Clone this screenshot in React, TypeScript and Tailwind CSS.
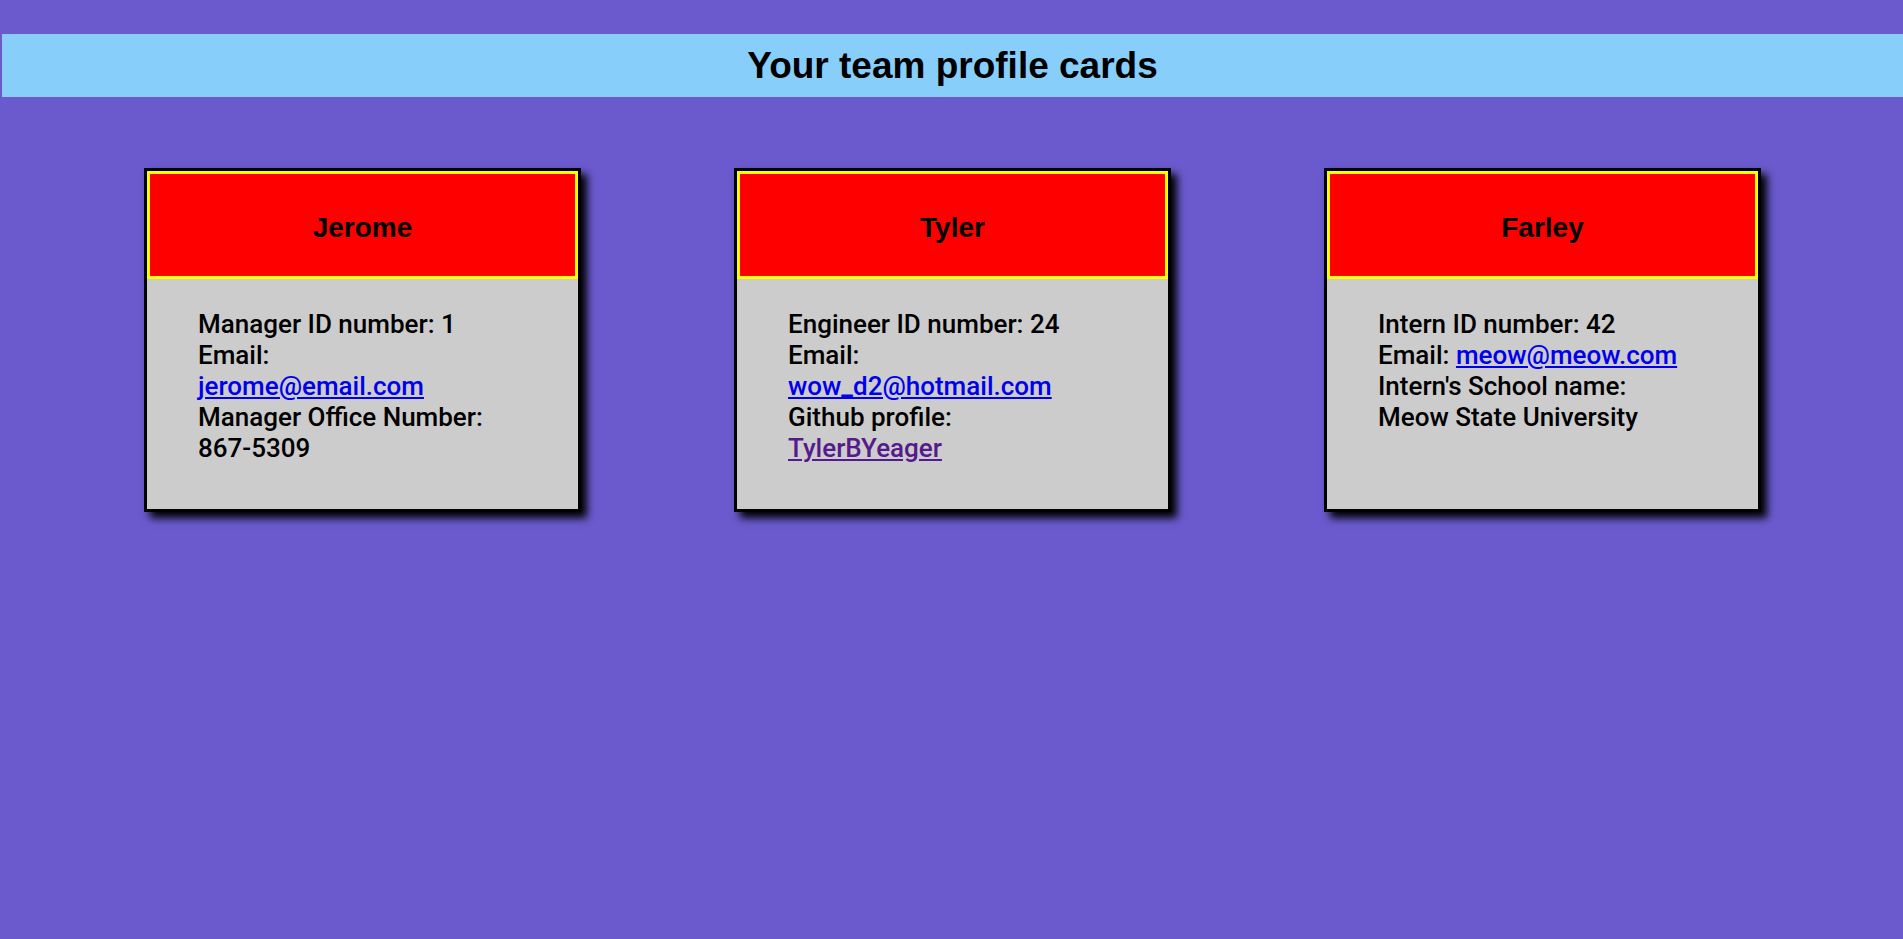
type Member = {
  name: string;
  rows: React.ReactNode;
};

const link = "text-[#0000ee] underline";
const visited = "text-[#551a8b] underline";

const members: Member[] = [
  {
    name: "Jerome",
    rows: (
      <>
        <p>Manager ID number: 1</p>
        <p>Email:</p>
        <p>
          <a href="#" className={link}>jerome@email.com</a>
        </p>
        <p>Manager Office Number:</p>
        <p>867-5309</p>
      </>
    ),
  },
  {
    name: "Tyler",
    rows: (
      <>
        <p>Engineer ID number: 24</p>
        <p>Email:</p>
        <p>
          <a href="#" className={link}>wow_d2@hotmail.com</a>
        </p>
        <p>Github profile:</p>
        <p>
          <a href="#" className={visited}>TylerBYeager</a>
        </p>
      </>
    ),
  },
  {
    name: "Farley",
    rows: (
      <>
        <p>Intern ID number: 42</p>
        <p>
          Email: <a href="#" className={link}>meow@meow.com</a>
        </p>
        <p>Intern's School name:</p>
        <p>Meow State University</p>
      </>
    ),
  },
];

const Card = ({ name, rows }: Member) => {
  return (
    <div className="w-[437px] border-[3px] border-black bg-[#cccccc] shadow-[6px_6px_8px_#000]">
      <div className="h-[108px] pt-[6px] border-[3px] border-[#ffff00] bg-[#ff0000] flex items-center justify-center">
        <h2 className="text-[28px] font-bold text-black">{name}</h2>
      </div>
      <div className="pt-[30px] pb-[45px] pl-[51px] text-[26px] leading-[31px] font-medium text-black whitespace-nowrap font-['Roboto',Arial,sans-serif]">
        {rows}
      </div>
    </div>
  );
};

export default function App() {
  return (
    <div className="min-h-screen bg-[#6a5acd] pt-[34px] font-['Liberation_Sans',Arial,sans-serif]">
      <header className="ml-[2px] h-[63px] bg-[#87cefa] flex items-center justify-center">
        <h1 className="text-[37px] font-bold text-black">Your team profile cards</h1>
      </header>

      <main className="mt-[71px] pl-[144px] flex gap-[153px]">
        {members.map((m) => (
          <Card key={m.name} {...m} />
        ))}
      </main>
    </div>
  );
}
